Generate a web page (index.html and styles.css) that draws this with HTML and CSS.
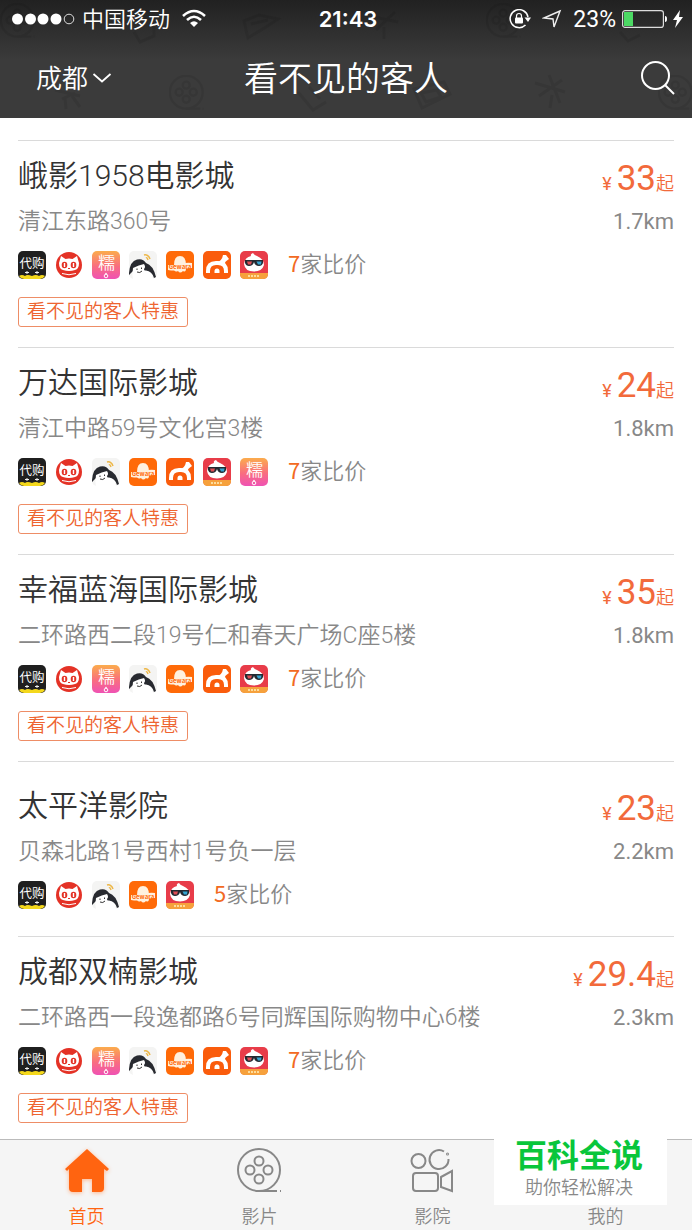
FILE: index.html
```html
<!DOCTYPE html>
<html lang="zh-CN">
<head>
<meta charset="utf-8">
<meta name="viewport" content="width=device-width, initial-scale=1">
<title>看不见的客人</title>
<link rel="stylesheet" href="styles.css">
</head>
<body>
<svg class="sprite" aria-hidden="true">
  <defs>
    <linearGradient id="pink" x1="0" y1="0" x2="0" y2="1"><stop offset="0" stop-color="#fbac4c"/><stop offset=".55" stop-color="#f96d80"/><stop offset="1" stop-color="#ef52b4"/></linearGradient>
    <symbol id="daigou" viewBox="0 0 28 28">
      <rect width="28" height="28" rx="5" fill="#1f1f1f"/>
      <path d="M1 25Q4 23 7 25Q9 23 14 25Q18 23 21 25Q24 23 27 25Q25 28 22 28H6Q3 28 1 25Z" fill="#f4d81c"/>
      <path d="M7 21.500h4M9 20v3M17 21.500h4M19 20v3" stroke="#eee" fill="none"/>
      <text x="14" y="16.500" text-anchor="middle" font-size="12.500" font-weight="400" fill="#fff">代购</text>
    </symbol>
    <symbol id="cat" viewBox="0 0 28 28">
      <circle cx="14" cy="14" r="13" fill="#e43226"/>
      <path d="M6 5L10.500 8Q14 7 17.500 8L22 5L24 12Q24 18 20 19Q14 21 8 19Q4 18 4 12Z" fill="#fff"/>
      <ellipse cx="9.500" cy="14" rx="2.800" ry="3.200" fill="#e43226"/><ellipse cx="18.500" cy="14" rx="2.800" ry="3.200" fill="#e43226"/>
      <path d="M9.500 12v4M18.500 12v4" stroke="#fff" stroke-width="1.400"/>
      <path d="M13 17.500h2" stroke="#e43226"/>
      <path d="M7 22.500Q14 25 21 22.500" stroke="#fff" fill="none"/>
    </symbol>
    <symbol id="nuomi" viewBox="0 0 28 28">
      <rect width="28" height="28" rx="5" fill="url(#pink)"/>
      <text x="14.500" y="17.500" text-anchor="middle" font-size="17" fill="#fff">糯</text>
      <circle cx="14" cy="25" r="1.800" fill="none" stroke="#fff"/><circle cx="14" cy="22.600" r=".8" fill="#fff"/>
    </symbol>
    <symbol id="penguin" viewBox="0 0 28 28">
      <rect width="28" height="28" rx="5" fill="#f4f4f3"/>
      <path d="M4 28Q2 19 6 15Q15 12 18 15Q23 20 24 28Z" fill="#fff"/>
      <path d="M0 22Q1 10 8 8.500Q14 7 17 12Q24 14 27 26L25 27Q23 20 17 19.500Q15 20 15 18Q17 16 15 13Q10 14 4 17Q4 20 3 21L0 24Z" fill="#282a30"/>
      <path d="M8 17.500v1.500M12.500 16.500v1.500M8 21Q11 22.500 13 20" stroke="#333" fill="none"/>
      <path d="M15 4Q19 3 21 8M17 7Q18 6 19 9" stroke="#edb747" stroke-width="1.500" fill="none"/>
    </symbol>
    <symbol id="gewara" viewBox="0 0 28 28">
      <rect width="28" height="28" rx="5" fill="#ff6a08"/>
      <path d="M8 14Q8 5 14 5Q20 5 20 14V17Q20 22 17 20Q14 23 12 20Q8 22 8 17Z" fill="#fff1df"/>
      <path d="M2 14Q9 15 15 13Q21 11 26 12V17Q20 17 14 19Q8 20 2 19Z" fill="#fff1df"/>
      <text x="14" y="17.500" text-anchor="middle" font-size="6" font-weight="700" fill="#ff6a08">Gewara</text>
    </symbol>
    <symbol id="maoyan" viewBox="0 0 28 28">
      <rect width="28" height="28" rx="5" fill="#fa5c0c"/>
      <path d="M5 22V20Q5 12 13 12H15Q23 12 23 20V22" fill="none" stroke="#fff" stroke-width="4"/>
      <path d="M14 11Q19 10 20 4H23L26 8L24 9.500Q21 11 22 15Z" fill="#fff"/>
      <path d="M11.500 22V20Q11.500 17.500 14 17.500T16.500 20V22Z" fill="#fff"/>
    </symbol>
    <symbol id="glasses" viewBox="0 0 28 28">
      <rect width="28" height="28" rx="5" fill="#e83c49"/>
      <path d="M0 22H28V23Q28 28 23 28H5Q0 28 0 23Z" fill="#f6a13c"/>
      <path d="M4 13Q5 6 11 5Q10 3 13 2Q14 4 17 5Q24 8 24 14Q22 20.500 14 20.500Q5 20.500 4 13Z" fill="#fff"/>
      <path d="M5 9H23V12Q22 15 19 15Q15 15 14 11Q13 15 9 15Q6 15 5 12Z" fill="#232931"/>
      <path d="M7 10.500H12L11 13.500H8Z" fill="#df4e56"/><path d="M16.500 10.500H21.500L21 13.500H18Z" fill="#35a4d1"/>
      <path d="M8 25H20" stroke="#fff0ba" stroke-width="1.500" stroke-dasharray="2 1"/>
    </symbol>
    <symbol id="reel" viewBox="0 0 46 46"><circle cx="22" cy="22" r="21"/><circle cx="22" cy="13" r="4.500"/><circle cx="13" cy="22" r="4.500"/><circle cx="31" cy="22" r="4.500"/><circle cx="22" cy="31" r="4.500"/><path d="M22 43H40M43 43h1"/></symbol>
    <symbol id="camera" viewBox="0 0 46 46"><circle cx="8.500" cy="13" r="7"/><path d="M34 3.500A9.500 9.500 0 1 0 38.500 11"/><circle cx="37.500" cy="6" r=".5"/><rect x="3" y="25" width="25" height="18" rx="3"/><path d="M31 29L42 23V43L31 39Z"/></symbol>
  </defs>
</svg>

<header class="top">
  <svg class="pattern" viewBox="0 0 692 118" aria-hidden="true">
    <use href="#reel" x="0" y="3" width="36" height="36"/><use href="#reel" x="169" y="75" width="36" height="36"/><use href="#reel" x="486" y="3" width="36" height="36"/><use href="#reel" x="658" y="75" width="36" height="36"/>
    <path d="M244 21L259 15L278 19L266 27L248 38ZM251 24L268 20M55 90L80 96M62 99L75 93M65 98L66 109M72 96L80 107M134 32L140 42L154 36V26M298 92L313 110L326 102M309 87L320 99M414 89L444 82L450 94L422 108ZM421 93L437 90L441 97L426 102ZM535 83L565 92M539 96L562 80M549 75L560 103M552 95L550 108M374 17L398 22M376 30L395 12M384 27V39M620 32L628 41L640 35"/>
  </svg>
  <div class="status">
    <div class="status-side">
      <svg width="64" height="14" viewBox="0 0 64 14" role="img" aria-label="信号"><g fill="#fff"><circle cx="5.500" cy="7" r="5.500"/><circle cx="18.500" cy="7" r="5.500"/><circle cx="31" cy="7" r="5.500"/><circle cx="44" cy="7" r="5.500"/></g><circle cx="57" cy="7" r="4.800" fill="none" stroke="#ddd"/></svg>
      <span class="carrier">中国移动</span>
      <svg class="wifi" width="24" height="20" viewBox="0 0 24 20" role="img" aria-label="Wi-Fi"><g fill="none" stroke="#fff" stroke-width="2.600"><path d="M1 7Q12-3 23 7"/><path d="M5 11Q12 4.500 19 11"/></g><path d="M8 14Q12 10.500 16 14L12 18Z" fill="#fff"/></svg>
    </div>
    <time class="clock">21:43</time>
    <div class="status-side status-end">
      <svg class="lock" width="22" height="20" viewBox="0 0 22 20" aria-hidden="true"><path d="M16.500 16A9 9 0 1 1 19 8" fill="none" stroke="#fff" stroke-width="1.500"/><path d="M15.500 8.500H22L19 13Z" fill="#fff"/><rect x="6" y="8.500" width="8" height="6" rx="1" fill="#fff"/><path d="M7.500 9V7Q7.500 4.500 10 4.500T12.500 7V9" fill="none" stroke="#fff" stroke-width="1.200"/></svg>
      <svg class="locate" width="20" height="20" viewBox="0 0 20 20" aria-hidden="true"><path d="M18 2L2 9L11 10L12 18Z" fill="none" stroke="#eee" stroke-width="1.400"/></svg>
      <span class="percent">23%</span>
      <svg width="46" height="18" viewBox="0 0 46 18" role="img" aria-label="电池"><rect x=".6" y=".6" width="40.800" height="16.800" rx="2.500" fill="none" stroke="#ddd" stroke-width="1.200"/><rect x="2" y="2" width="9" height="14" fill="#4cd964"/><path d="M43 6Q45 6 45 9T43 12Z" fill="#fff"/></svg>
      <svg class="bolt" width="12" height="18" viewBox="0 0 12 18" aria-hidden="true"><path d="M8 0L1 10H5L3 18L11 7H7Z" fill="#fff"/></svg>
    </div>
  </div>
  <nav class="nav">
    <button class="city" type="button"><span>成都</span><svg width="20" height="12" viewBox="0 0 20 12" aria-hidden="true"><path d="M1.500 2L10 9.500L18.500 2" fill="none" stroke="#fff" stroke-width="1.800"/></svg></button>
    <h1>看不见的客人</h1>
    <button class="search" type="button" aria-label="搜索"><svg width="36" height="36" viewBox="0 0 36 36" aria-hidden="true"><circle cx="15.500" cy="15.500" r="13.500" fill="none" stroke="#fff" stroke-width="2"/><path d="M25 25L34 34" stroke="#fff" stroke-width="2"/></svg></button>
  </nav>
</header>

<main class="list">
  <article class="cinema">
    <div class="line"><h2>峨影1958电影城</h2><p class="price"><small class="yen">¥</small>33<small>起</small></p></div>
    <div class="line address"><p>清江东路360号</p><span class="distance">1.7km</span></div>
    <div class="vendors"><svg><use href="#daigou"/></svg><svg><use href="#cat"/></svg><svg><use href="#nuomi"/></svg><svg><use href="#penguin"/></svg><svg><use href="#gewara"/></svg><svg><use href="#maoyan"/></svg><svg><use href="#glasses"/></svg><span class="compare"><b>7</b>家比价</span></div>
    <span class="tag">看不见的客人特惠</span>
  </article>
  <article class="cinema">
    <div class="line"><h2>万达国际影城</h2><p class="price"><small class="yen">¥</small>24<small>起</small></p></div>
    <div class="line address"><p>清江中路59号文化宫3楼</p><span class="distance">1.8km</span></div>
    <div class="vendors"><svg><use href="#daigou"/></svg><svg><use href="#cat"/></svg><svg><use href="#penguin"/></svg><svg><use href="#gewara"/></svg><svg><use href="#maoyan"/></svg><svg><use href="#glasses"/></svg><svg><use href="#nuomi"/></svg><span class="compare"><b>7</b>家比价</span></div>
    <span class="tag">看不见的客人特惠</span>
  </article>
  <article class="cinema">
    <div class="line"><h2>幸福蓝海国际影城</h2><p class="price"><small class="yen">¥</small>35<small>起</small></p></div>
    <div class="line address"><p>二环路西二段19号仁和春天广场C座5楼</p><span class="distance">1.8km</span></div>
    <div class="vendors"><svg><use href="#daigou"/></svg><svg><use href="#cat"/></svg><svg><use href="#nuomi"/></svg><svg><use href="#penguin"/></svg><svg><use href="#gewara"/></svg><svg><use href="#maoyan"/></svg><svg><use href="#glasses"/></svg><span class="compare"><b>7</b>家比价</span></div>
    <span class="tag">看不见的客人特惠</span>
  </article>
  <article class="cinema cinema-plain">
    <div class="line"><h2>太平洋影院</h2><p class="price"><small class="yen">¥</small>23<small>起</small></p></div>
    <div class="line address"><p>贝森北路1号西村1号负一层</p><span class="distance">2.2km</span></div>
    <div class="vendors"><svg><use href="#daigou"/></svg><svg><use href="#cat"/></svg><svg><use href="#penguin"/></svg><svg><use href="#gewara"/></svg><svg><use href="#glasses"/></svg><span class="compare"><b>5</b>家比价</span></div>
  </article>
  <article class="cinema">
    <div class="line"><h2>成都双楠影城</h2><p class="price"><small class="yen">¥</small>29.4<small>起</small></p></div>
    <div class="line address"><p>二环路西一段逸都路6号同辉国际购物中心6楼</p><span class="distance">2.3km</span></div>
    <div class="vendors"><svg><use href="#daigou"/></svg><svg><use href="#cat"/></svg><svg><use href="#nuomi"/></svg><svg><use href="#penguin"/></svg><svg><use href="#gewara"/></svg><svg><use href="#maoyan"/></svg><svg><use href="#glasses"/></svg><span class="compare"><b>7</b>家比价</span></div>
    <span class="tag">看不见的客人特惠</span>
  </article>
</main>

<footer class="tabs">
  <a class="tab active" href="#home"><svg viewBox="0 0 46 46" aria-hidden="true"><path d="M23 1L45 21L43 23L40 21V40Q40 44 36 44H28V31H18V44H9Q5 44 5 40V21L3 23L1 21Z" fill="#ff6410"/></svg>首页</a>
  <a class="tab" href="#films"><svg aria-hidden="true"><use href="#reel"/></svg>影片</a>
  <a class="tab" href="#cinemas"><svg aria-hidden="true"><use href="#camera"/></svg>影院</a>
  <a class="tab" href="#mine"><svg aria-hidden="true"></svg>我的</a>
  <aside class="badge"><strong>百科全说</strong><span>助你轻松解决</span></aside>
</footer>
</body>
</html>
```
FILE: styles.css
```css
* { box-sizing: border-box; }
body {
  margin: 0;
  min-height: 100vh;
  display: flex;
  flex-direction: column;
  background: #fff;
  color: #333;
  font-family: Roboto, "Noto Sans CJK SC", sans-serif;
  font-weight: 350;
}
h1, h2, p { margin: 0; font-weight: inherit; }
button { padding: 0; border: 0; background: none; color: inherit; font: inherit; }
svg { display: block; flex: none; }
.sprite { position: absolute; width: 0; height: 0; }

.top {
  position: relative;
  color: #fff;
  background: linear-gradient(#212121, #3b3b3b 60px);
}
.pattern {
  position: absolute;
  inset: 0;
  width: 100%;
  height: 100%;
  fill: none;
  stroke: #000;
  stroke-width: 3;
  opacity: .08;
}
.status, .nav {
  position: relative;
  display: grid;
  grid-template-columns: 1fr auto 1fr;
  align-items: center;
}
.status { height: 38px; padding: 0 8px 0 12px; font-size: 22px; }
.status-side { display: flex; align-items: center; }
.status-end { justify-content: flex-end; }
.carrier { margin: 0 12px 0 6px; padding-bottom: 4px; }
.clock { font-family: Inter, sans-serif; font-size: 22px; font-weight: 600; }
.locate { margin: 0 11px; }
.percent { margin-right: 6px; font-size: 23px; font-weight: 400; }
.bolt { margin-left: 4px; }
.nav { height: 80px; padding: 0 16px; }
.nav h1 { padding-bottom: 4px; font-size: 34px; }
.city { justify-self: start; display: flex; align-items: center; gap: 4px; margin-left: 20px; font-size: 26px; }
.city span { padding-bottom: 4px; }
.search { justify-self: end; }

.list { flex: 1; padding: 22px 18px 0; }
.cinema { padding: 14px 0 20px; border-top: 1px solid #dadada; }
.cinema-plain { padding: 23px 0 27px; }
.cinema:last-child { padding-bottom: 16px; }
.line { display: flex; justify-content: space-between; align-items: flex-start; height: 44px; }
.line h2 { font-size: 30px; line-height: 42px; }
.address { height: 30px; margin-top: 8px; line-height: 30px; color: #888; font-size: 23px; }
.distance { font-size: 22px; font-weight: 400; }
.price { color: #f26a3b; font-size: 35px; font-weight: 400; line-height: 48px; }
.price small { font-size: 18px; font-weight: 350; }
.price .yen { margin-right: 5px; font-weight: 400; }
.vendors { display: flex; align-items: flex-start; gap: 9px; height: 28px; margin-top: 14px; font-family: "Noto Sans CJK SC", sans-serif; }
.vendors svg { width: 28px; height: 28px; }
.compare { margin-left: 11px; color: #888; font-size: 22px; line-height: 22px; }
.compare b { color: #f26a22; font-weight: 400; }
.tag {
  display: block;
  width: fit-content;
  margin-top: 18px;
  padding: 0 8px;
  border: 1px solid #ee8d66;
  border-radius: 3px;
  color: #ee6430;
  font-size: 19px;
  line-height: 28px;
}

.tabs {
  position: sticky;
  bottom: 0;
  display: grid;
  grid-template-columns: repeat(4, 1fr);
  border-top: 1px solid #bbb;
  background: #f5f5f5;
}
.tab {
  display: flex;
  flex-direction: column;
  align-items: center;
  gap: 11px;
  padding: 8px 0 1px;
  color: #888;
  font-size: 18px;
  line-height: 24px;
  text-decoration: none;
}
.tab svg { width: 46px; height: 46px; fill: none; stroke: #888; stroke-width: 2; }
.active { color: #ff6410; }
.active svg { stroke: none; filter: drop-shadow(0 1px 2px #ffb58c); }
.badge {
  position: absolute;
  right: 25px;
  bottom: 25px;
  display: flex;
  flex-direction: column;
  align-items: center;
  width: 173px;
  padding: 3px 3px 5px 0;
  background: #fff;
  color: #888;
  font-size: 18px;
  line-height: 24px;
}
.badge strong { color: #09c63b; font-size: 32px; font-weight: 700; line-height: 39px; }
```
